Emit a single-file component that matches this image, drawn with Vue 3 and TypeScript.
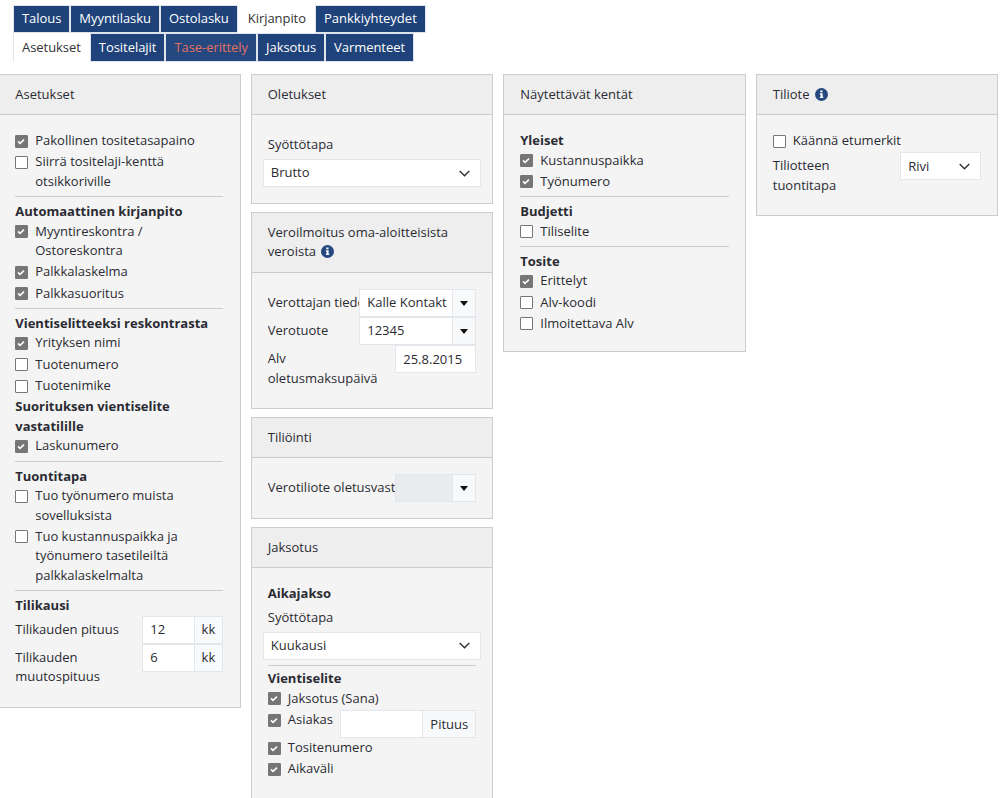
<script setup lang="ts">
const topTabs = [
  { label: 'Talous' },
  { label: 'Myyntilasku' },
  { label: 'Ostolasku' },
  { label: 'Kirjanpito', active: true },
  { label: 'Pankkiyhteydet' },
]
const subTabs = [
  { label: 'Asetukset', active: true },
  { label: 'Tositelajit' },
  { label: 'Tase-erittely', warn: true },
  { label: 'Jaksotus' },
  { label: 'Varmenteet' },
]
</script>

<template>
  <div class="page">
    <nav class="tabs">
      <a v-for="t in topTabs" :key="t.label" class="tab" :class="{ active: t.active }">{{ t.label }}</a>
    </nav>
    <nav class="tabs sub">
      <a v-for="t in subTabs" :key="t.label" class="tab" :class="{ active: t.active, warn: t.warn }">{{ t.label }}</a>
    </nav>

    <div class="cols">
      <div class="col">
        <section class="card">
          <header class="head">Asetukset</header>
          <div class="body first">
            <label class="chk"><i class="box on"><svg viewBox="0 0 13 13"><path d="M3 6.4l2 2 4-3.8" /></svg></i><span>Pakollinen tositetasapaino</span></label>
            <label class="chk"><i class="box"></i><span>Siirrä tositelaji-kenttä otsikkoriville</span></label>
            <hr />
            <h4>Automaattinen kirjanpito</h4>
            <label class="chk"><i class="box on"><svg viewBox="0 0 13 13"><path d="M3 6.4l2 2 4-3.8" /></svg></i><span>Myyntireskontra / Ostoreskontra</span></label>
            <label class="chk"><i class="box on"><svg viewBox="0 0 13 13"><path d="M3 6.4l2 2 4-3.8" /></svg></i><span>Palkkalaskelma</span></label>
            <label class="chk"><i class="box on"><svg viewBox="0 0 13 13"><path d="M3 6.4l2 2 4-3.8" /></svg></i><span>Palkkasuoritus</span></label>
            <hr />
            <h4>Vientiselitteeksi reskontrasta</h4>
            <label class="chk"><i class="box on"><svg viewBox="0 0 13 13"><path d="M3 6.4l2 2 4-3.8" /></svg></i><span>Yrityksen nimi</span></label>
            <label class="chk"><i class="box"></i><span>Tuotenumero</span></label>
            <label class="chk"><i class="box"></i><span>Tuotenimike</span></label>
            <h4>Suorituksen vientiselite vastatilille</h4>
            <label class="chk"><i class="box on"><svg viewBox="0 0 13 13"><path d="M3 6.4l2 2 4-3.8" /></svg></i><span>Laskunumero</span></label>
            <hr />
            <h4>Tuontitapa</h4>
            <label class="chk"><i class="box"></i><span>Tuo työnumero muista sovelluksista</span></label>
            <label class="chk"><i class="box"></i><span>Tuo kustannuspaikka ja työnumero tasetileiltä palkkalaskelmalta</span></label>
            <hr />
            <h4>Tilikausi</h4>
            <div class="row">
              <span class="lbl">Tilikauden pituus</span>
              <div class="group w81"><span class="inp">12</span><span class="addon">kk</span></div>
            </div>
            <div class="row">
              <span class="lbl">Tilikauden muutospituus</span>
              <div class="group w81"><span class="inp">6</span><span class="addon">kk</span></div>
            </div>
          </div>
        </section>
      </div>

      <div class="col">
        <section class="card">
          <header class="head">Oletukset</header>
          <div class="body">
            <div class="cap">Syöttötapa</div>
            <div class="select wide">Brutto<svg viewBox="0 0 11 7"><path d="M.7 1l4.8 4.8L10.3 1" /></svg></div>
          </div>
        </section>
        <section class="card">
          <header class="head">Veroilmoitus oma-aloitteisista veroista <svg class="info" viewBox="0 0 13 13"><circle cx="6.5" cy="6.5" r="6.5" /><path class="glyph" d="M5.3 2.6h2.2v1.7H5.3zM4.9 5.3h2.7v3.4h.7v1.4H4.9V8.7h.7v-2h-.7z" /></svg></header>
          <div class="body">
            <div class="row">
              <span class="lbl clip">Verottajan tiedot</span>
              <div class="group w117"><span class="inp">Kalle Kontakt</span><span class="caret"></span></div>
            </div>
            <div class="row">
              <span class="lbl clip">Verotuote</span>
              <div class="group w117"><span class="inp">12345</span><span class="caret"></span></div>
            </div>
            <div class="row after">
              <span class="lbl">Alv oletusmaksupäivä</span>
              <div class="group w81"><span class="inp">25.8.2015</span></div>
            </div>
          </div>
        </section>
        <section class="card">
          <header class="head">Tiliöinti</header>
          <div class="body">
            <div class="row">
              <span class="lbl clip">Verotiliote oletusvastatili</span>
              <div class="group w81"><span class="inp off"></span><span class="caret"></span></div>
            </div>
          </div>
        </section>
        <section class="card">
          <header class="head">Jaksotus</header>
          <div class="body tall">
            <h4>Aikajakso</h4>
            <div class="cap">Syöttötapa</div>
            <div class="select wide">Kuukausi<svg viewBox="0 0 11 7"><path d="M.7 1l4.8 4.8L10.3 1" /></svg></div>
            <hr class="near" />
            <h4>Vientiselite</h4>
            <label class="chk"><i class="box on"><svg viewBox="0 0 13 13"><path d="M3 6.4l2 2 4-3.8" /></svg></i><span>Jaksotus (Sana)</span></label>
            <div class="chk split">
              <i class="box on"><svg viewBox="0 0 13 13"><path d="M3 6.4l2 2 4-3.8" /></svg></i><span>Asiakas</span>
              <div class="group w136"><span class="inp"></span><span class="addon">Pituus</span></div>
            </div>
            <label class="chk"><i class="box on"><svg viewBox="0 0 13 13"><path d="M3 6.4l2 2 4-3.8" /></svg></i><span>Tositenumero</span></label>
            <label class="chk"><i class="box on"><svg viewBox="0 0 13 13"><path d="M3 6.4l2 2 4-3.8" /></svg></i><span>Aikaväli</span></label>
          </div>
        </section>
      </div>

      <div class="col">
        <section class="card">
          <header class="head">Näytettävät kentät</header>
          <div class="body">
            <h4>Yleiset</h4>
            <label class="chk"><i class="box on"><svg viewBox="0 0 13 13"><path d="M3 6.4l2 2 4-3.8" /></svg></i><span>Kustannuspaikka</span></label>
            <label class="chk"><i class="box on"><svg viewBox="0 0 13 13"><path d="M3 6.4l2 2 4-3.8" /></svg></i><span>Työnumero</span></label>
            <hr />
            <h4>Budjetti</h4>
            <label class="chk"><i class="box"></i><span>Tiliselite</span></label>
            <hr />
            <h4>Tosite</h4>
            <label class="chk"><i class="box on"><svg viewBox="0 0 13 13"><path d="M3 6.4l2 2 4-3.8" /></svg></i><span>Erittelyt</span></label>
            <label class="chk"><i class="box"></i><span>Alv-koodi</span></label>
            <label class="chk"><i class="box"></i><span>Ilmoitettava Alv</span></label>
          </div>
        </section>
      </div>

      <div class="col">
        <section class="card">
          <header class="head">Tiliote <svg class="info" viewBox="0 0 13 13"><circle cx="6.5" cy="6.5" r="6.5" /><path class="glyph" d="M5.3 2.6h2.2v1.7H5.3zM4.9 5.3h2.7v3.4h.7v1.4H4.9V8.7h.7v-2h-.7z" /></svg></header>
          <div class="body">
            <label class="chk"><i class="box"></i><span>Käännä etumerkit</span></label>
            <div class="row">
              <span class="lbl">Tiliotteen tuontitapa</span>
              <div class="select w81">Rivi<svg viewBox="0 0 11 7"><path d="M.7 1l4.8 4.8L10.3 1" /></svg></div>
            </div>
          </div>
        </section>
      </div>
    </div>
  </div>
</template>

<style>
html, body { margin: 0; overflow: hidden; height: 100%; background: #fff; }
</style>

<style scoped>
.page {
  font-family: "Open Sans", sans-serif;
  font-size: 13px;
  line-height: 19.5px;
  color: #2b2b33;
  height: 798px;
  overflow: hidden;
}
.tabs { display: flex; padding: 4.5px 0 0 13px; }
.tabs.sub { padding-top: 0; }
.tab {
  background: #1e4279;
  color: #fff;
  border: 1px solid #dfe4ec;
  padding: 3.5px 8px;
  margin-right: -1px;
  white-space: nowrap;
  letter-spacing: -0.05px;
}
.tab + .tab { margin-left: 1px; }
.tab + .tab.active { margin-left: 2px; }
.tabs:not(.sub) .tab:last-child { letter-spacing: 0; }
.tab.active { background: #fff; color: #333; border-color: #fff; }
.tab.warn { background: #24487f; color: #e2705f; }
.tabs.sub .tab.active { border-left-color: #dfe4ec; }

.cols {
  display: grid;
  grid-template-columns: repeat(4, 242.5px);
  column-gap: 10px;
  margin: 12.5px 0 0 -1.75px;
  align-items: start;
}
.col { display: flex; flex-direction: column; gap: 8px; min-width: 0; }
.card { border: 1px solid #ccc; background: #f4f4f4; }
.head {
  background: #eee;
  border-bottom: 1px solid #ccc;
  padding: 9.5px 16px 10px;
}
.body { padding: 16px; }
.body.first { padding-right: 16.5px; }
.body.tall { padding-bottom: 40px; }
h4 { margin: 0; font-size: 13px; font-weight: 700; line-height: 19.5px; color: #2b2b33; }
hr { border: 0; border-top: 1px solid #ccc; margin: 5px 0 4.8px; }
hr.near { margin: 5px 0 3.75px; }
.chk { display: flex; align-items: flex-start; margin-bottom: 1.8px; }
.box {
  flex: none;
  box-sizing: border-box;
  width: 13px;
  height: 13px;
  margin: 3.5px 7px 0 0;
  border: 1px solid #767676;
  background: #fff;
  border-radius: 1px;
  display: block;
  position: relative;
}
.box.on { background: #767676; }
.box svg { position: absolute; inset: -1px; width: 13px; height: 13px; fill: none; stroke: #fff; stroke-width: 1.5; }
.row { display: flex; align-items: flex-start; }
.row.after { margin-top: 0.5px; }
.lbl { flex: 1; min-width: 0; padding: 4px 10px 4px 0; }
.clip { white-space: nowrap; overflow: hidden; padding-right: 0; }
.group { display: flex; flex: none; height: 28px; box-sizing: border-box; }
.w81 { width: 81px; }
.w117 { width: 117px; }
.w136 { width: 136px; margin-left: auto; }
.inp {
  flex: 1;
  min-width: 0;
  border: 1px solid #e3e6ea;
  background: #fff;
  padding: 3.5px 7px;
  white-space: nowrap;
  overflow: hidden;
}
.inp.off { background: #e9ecef; }
.addon {
  flex: none;
  border: 1px solid #e3e6ea;
  border-left: 0;
  background: #f8f9fa;
  padding: 3.5px 7px;
}
.caret {
  flex: none;
  width: 23px;
  box-sizing: border-box;
  border: 1px solid #e3e6ea;
  border-left: 0;
  background: #f8f9fa;
  position: relative;
}
.caret::after {
  content: "";
  position: absolute;
  left: 7px;
  top: 11px;
  border: 4px solid transparent;
  border-top: 5px solid #111;
  border-bottom: 0;
}
.cap { margin: 4px 0 4.5px; }
.select {
  display: flex;
  align-items: center;
  justify-content: space-between;
  height: 28px;
  box-sizing: border-box;
  border: 1px solid #e3e6ea;
  background: #fff;
  padding: 0 10px 0 7px;
  flex: none;
}
.select svg { width: 11px; height: 7px; fill: none; stroke: #333; stroke-width: 1.4; }
.select.wide { margin: 0 -5px; }
.split { margin-bottom: 0; }
.info {
  display: inline-block;
  width: 13px;
  height: 13px;
  margin-left: 2px;
  vertical-align: -2px;
  fill: #24487f;
}
.info .glyph { fill: #fff; }
</style>
